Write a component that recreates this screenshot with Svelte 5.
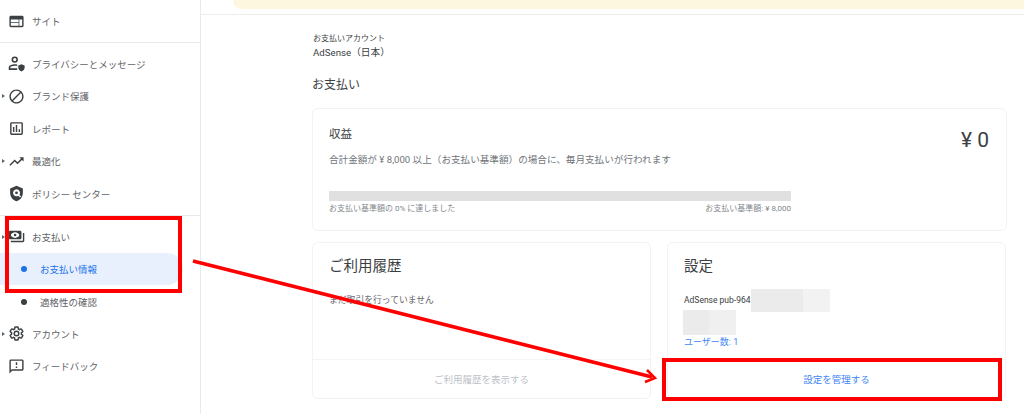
<script>
  // side nav rows, top to bottom
  const icons = {
    site: "M20 4H4c-1.100 0-2 .9-2 2v12c0 1.100.9 2 2 2h16c1.100 0 2-.9 2-2V6c0-1.100-.9-2-2-2zm-5 14H4v-4h11v4zm0-5H4V9h11v4zm5 5h-4V9h4v9z",
    block: "M12 2C6.480 2 2 6.480 2 12s4.480 10 10 10 10-4.480 10-10S17.520 2 12 2zM4 12c0-4.420 3.580-8 8-8 1.850 0 3.550.63 4.900 1.690L5.690 16.900C4.630 15.550 4 13.850 4 12zm8 8c-1.850 0-3.550-.63-4.900-1.690L18.310 7.100C19.370 8.450 20 10.150 20 12c0 4.420-3.580 8-8 8z",
    report: "M19 3H5c-1.100 0-2 .9-2 2v14c0 1.100.9 2 2 2h14c1.100 0 2-.9 2-2V5c0-1.100-.9-2-2-2zm0 16H5V5h14v14zM7 10h2v7H7zm4-3h2v10h-2zm4 6h2v4h-2z",
    trend: "M16 6l2.290 2.290-4.880 4.880-4-4L2 16.590 3.410 18l6-6 4 4 6.300-6.290L22 12V6z",
    policy: "M12 1L3 5v6c0 5.550 3.840 10.740 9 12 5.160-1.260 9-6.450 9-12V5l-9-4zm0 5a5 5 0 0 1 4.100 7.900l2.300 2.300-1.400 1.400-2.300-2.300A5 5 0 1 1 12 6zm0 3a2 2 0 1 0 0 4 2 2 0 0 0 0-4z",
    payments: "M19 14V6c0-1.100-.9-2-2-2H3c-1.100 0-2 .9-2 2v8c0 1.100.9 2 2 2h14c1.100 0 2-.9 2-2zM10 6c2.500 0 6 2 6 4s-3.500 4-6 4-6-2-6-4 3.500-4 6-4zm0 2.200a1.800 1.800 0 1 0 0 3.600 1.800 1.800 0 0 0 0-3.600zM23 7v11c0 1.100-.9 2-2 2H4v-2h17V7h2z",
    feedback: "M20 2H4c-1.100 0-1.990.9-1.990 2L2 22l4-4h14c1.100 0 2-.9 2-2V4c0-1.100-.9-2-2-2zm0 14H5.170L4 17.170V4h16v12zM11 12h2v2h-2zm0-6h2v4h-2z",
    person: "M9.500 2a4.500 4.500 0 1 1 0 9 4.500 4.500 0 0 1 0-9zm0 2.200a2.300 2.300 0 1 0 0 4.600 2.300 2.300 0 0 0 0-4.600zM1 21v-3.500c0-3 5.500-4.500 8.500-4.500 1 0 2.300.2 3.500.5v2.200c-1.100-.3-2.500-.5-3.500-.5-2.600 0-6.200 1.200-6.200 2.300v1.200H13V21H1zm18-8l4.500 1.800v3c0 2.700-2 4.600-4.500 5.400-2.500-.8-4.500-2.700-4.500-5.400v-3L19 13z",
    gear: "M19.430 12.980c.04-.32.07-.64.07-.98s-.03-.66-.07-.98l2.110-1.650c.19-.15.24-.42.12-.64l-2-3.460c-.12-.22-.39-.3-.61-.22l-2.490 1c-.52-.4-1.080-.73-1.690-.98l-.38-2.650C14.460 2.180 14.250 2 14 2h-4c-.25 0-.46.18-.49.42l-.38 2.650c-.61.25-1.170.59-1.690.98l-2.490-1c-.23-.08-.49 0-.61.22l-2 3.460c-.13.22-.07.49.12.64l2.110 1.650c-.04.32-.07.65-.07.98s.03.66.07.98l-2.110 1.650c-.19.15-.24.42-.12.64l2 3.460c.12.22.39.3.61.22l2.490-1c.52.4 1.080.73 1.690.98l.38 2.650c.03.24.24.42.49.42h4c.25 0 .46-.18.49-.42l.38-2.650c.61-.25 1.170-.59 1.690-.98l2.490 1c.23.08.49 0 .61-.22l2-3.460c.12-.22.07-.49-.12-.64l-2.110-1.650zM12 15.500c-1.930 0-3.500-1.570-3.500-3.500s1.570-3.500 3.500-3.500 3.500 1.570 3.500 3.500-1.570 3.500-3.500 3.500z"
  };

  const group1 = [
    { label: "プライバシーとメッセージ", icon: "person" },
    { label: "ブランド保護", icon: "block", caret: true },
    { label: "レポート", icon: "report" },
    { label: "最適化", icon: "trend", caret: true },
    { label: "ポリシー センター", icon: "policy" }
  ];
  const group2 = [
    { label: "アカウント", icon: "gear", caret: true, outline: true },
    { label: "フィードバック", icon: "feedback" }
  ];
</script>

{#snippet navRow(item)}
  <div class="nav-row">
    <span class="caret" class:on={item.caret}></span>
    <svg class="nav-icon" class:outline={item.outline} viewBox={item.outline ? "-1 -1 26 26" : "0 0 24 24"}>
      <path d={icons[item.icon]} fill-rule="evenodd" />
    </svg>
    <span>{item.label}</span>
  </div>
{/snippet}

<div class="page">
  <aside class="side">
    <div class="group first">
      {@render navRow({ label: "サイト", icon: "site" })}
    </div>
    <div class="group">
      {#each group1 as item}
        {@render navRow(item)}
      {/each}
    </div>
    <div class="group last">
      {@render navRow({ label: "お支払い", icon: "payments", caret: true })}
      <div class="sub-row active"><span class="dot"></span>お支払い情報</div>
      <div class="sub-row"><span class="dot"></span>適格性の確認</div>
      {#each group2 as item}
        {@render navRow(item)}
      {/each}
    </div>
  </aside>

  <main class="main">
    <div class="top-strip"><div class="banner"></div></div>
    <div class="content">
      <div class="acct-label">お支払いアカウント</div>
      <div class="acct-name">AdSense（日本）</div>
      <h1 class="page-title">お支払い</h1>

      <section class="card earnings">
        <div class="earn-head">
          <div>
            <h2 class="earn-title">収益</h2>
            <p class="earn-note">合計金額が ¥ 8,000 以上（お支払い基準額）の場合に、毎月支払いが行われます</p>
          </div>
          <div class="earn-amount">¥ 0</div>
        </div>
        <div class="bar"></div>
        <div class="bar-caps">
          <span>お支払い基準額の 0% に達しました</span>
          <span>お支払い基準額: ¥ 8,000</span>
        </div>
      </section>

      <div class="cols">
        <section class="card col">
          <div class="col-body">
            <h2 class="col-title">ご利用履歴</h2>
            <p class="col-text">まだ取引を行っていません</p>
          </div>
          <div class="col-foot muted">ご利用履歴を表示する</div>
        </section>
        <section class="card col">
          <div class="col-body">
            <h2 class="col-title">設定</h2>
            <div class="pub-line">AdSense pub-964<span class="mask m1"></span></div>
            <div class="mask m2"></div>
            <div class="users">ユーザー数: 1</div>
          </div>
          <div class="col-foot link">設定を管理する</div>
        </section>
      </div>
    </div>
  </main>

  <!-- red annotations drawn over the screenshot -->
  <div class="mark mark-nav"></div>
  <div class="mark mark-manage"></div>
  <svg class="arrow" viewBox="0 0 1024 414" width="1024" height="414">
    <line x1="193" y1="261" x2="652" y2="377" stroke="#f00" stroke-width="3.500" />
    <path d="M647 370 L655 378 L645 382" fill="none" stroke="#f00" stroke-width="2.500" />
  </svg>
</div>

<style>
  :global(body) {
    margin: 0;
    background: #fff;
  }

  .page {
    position: relative;
    display: flex;
    width: 1024px;
    height: 414px;
    overflow: hidden;
    font-family: Roboto, "Noto Sans CJK JP", sans-serif;
    color: #3c4043;
  }

  .side {
    width: 200px;
    flex: none;
    border-right: 1px solid #e8eaed;
  }

  .group {
    border-bottom: 1px solid #e8eaed;
    padding: 4.4px 0 5px;
  }

  .group.first {
    padding: 5px 0;
  }

  .group.last {
    border-bottom: none;
    padding-top: 4.8px;
  }

  .nav-row,
  .sub-row {
    display: flex;
    align-items: center;
    height: 32.4px;
    font-size: 9.5px;
    color: #5f6368;
  }

  .caret {
    width: 0;
    height: 0;
    margin: 0 2.5px 0 2px;
    border-left: 3px solid transparent;
    border-top: 2.5px solid transparent;
    border-bottom: 2.5px solid transparent;
  }

  .caret.on {
    border-left-color: #5f6368;
  }

  .nav-icon {
    width: 17px;
    height: 17px;
    margin-right: 7.5px;
    fill: #3c4043;
    flex: none;
  }

  .nav-icon.outline {
    fill: none;
    stroke: #3c4043;
    stroke-width: 2.2;
  }

  .sub-row {
    padding-left: 21px;
    width: 183px;
    box-sizing: border-box;
    border-radius: 0 16px 16px 0;
  }

  .dot {
    width: 6px;
    height: 6px;
    border-radius: 50%;
    background: #3c4043;
    margin-right: 13px;
  }

  .sub-row.active {
    background: #e8f0fe;
    color: #1a73e8;
  }

  .sub-row.active .dot {
    background: #1a73e8;
  }

  .main {
    flex: 1;
    min-width: 0;
  }

  .top-strip {
    height: 14px;
    padding-left: 32px;
    border-bottom: 1px solid #eceef0;
  }

  .banner {
    height: 9px;
    background: #fef7e0;
    border-radius: 0 0 0 8px;
  }

  .content {
    padding: 18px 17px 0 111px;
  }

  .acct-label {
    font-size: 8px;
    line-height: 11px;
    padding-left: 1px;
  }

  .acct-name {
    font-size: 9.7px;
    line-height: 14px;
    margin-top: 2px;
    padding-left: 1px;
  }

  .page-title {
    font-size: 12px;
    font-weight: 400;
    line-height: 18px;
    margin: 16px 0 14px;
  }

  .card {
    border: 1px solid #f1f3f4;
    border-radius: 6px;
    box-sizing: border-box;
    background: #fff;
  }

  .earnings {
    height: 123px;
    padding: 16px 17px 0 16px;
  }

  .earn-head {
    display: flex;
    justify-content: space-between;
    height: 45px;
  }

  .earn-title {
    font-size: 11.5px;
    font-weight: 400;
    line-height: 18px;
    margin: 0;
  }

  .earn-note {
    font-size: 9.6px;
    line-height: 14px;
    margin: 10px 0 0;
    color: #70757a;
  }

  .earn-amount {
    font-size: 21px;
    line-height: 28px;
    margin-top: 1px;
  }

  .bar {
    width: 462px;
    height: 10px;
    margin-top: 21px;
    background: #e0e0e0;
  }

  .bar-caps {
    width: 462px;
    display: flex;
    justify-content: space-between;
    font-size: 8px;
    line-height: 11px;
    margin-top: 2px;
    color: #80868b;
  }

  .cols {
    display: grid;
    grid-template-columns: 339px 339px;
    gap: 16px;
    margin-top: 11px;
  }

  .col {
    height: 157px;
    display: flex;
    flex-direction: column;
  }

  .col-body {
    flex: 1;
    padding: 14px 16px 0;
    min-height: 0;
  }

  .col-title {
    font-size: 14.5px;
    font-weight: 400;
    line-height: 20px;
    margin: 0;
  }

  .col-text {
    font-size: 8.8px;
    line-height: 13px;
    margin: 17px 0 0;
    color: #5f6368;
  }

  .pub-line {
    display: flex;
    font-size: 8.5px;
    line-height: 13px;
    margin-top: 17px;
    height: 13px;
  }

  .mask {
    display: block;
    background: linear-gradient(90deg, #ebebeb 0 66%, #f2f2f2 66%);
  }

  .m1 {
    width: 79px;
    height: 23px;
    margin-top: -5px;
  }

  .m2 {
    width: 53px;
    height: 25px;
    margin: 3px 0 0 -1px;
    background: linear-gradient(90deg, #ebebeb 0 50%, #f0f0f0 50%);
  }

  .users {
    font-size: 9px;
    line-height: 13px;
    margin-top: 1px;
    color: #4285f4;
  }

  .col-foot {
    height: 38px;
    display: flex;
    align-items: center;
    justify-content: center;
    border-top: 1px solid #f3f4f5;
    font-size: 9.5px;
  }

  .muted {
    color: #bdc1c6;
  }

  .link {
    color: #4285f4;
  }

  .mark {
    position: absolute;
    box-sizing: border-box;
    border: 4px solid #f00;
  }

  .mark-nav {
    left: 5px;
    top: 216px;
    width: 177px;
    height: 77px;
  }

  .mark-manage {
    left: 662px;
    top: 358px;
    width: 340px;
    height: 43px;
  }

  .arrow {
    position: absolute;
    left: 0;
    top: 0;
    pointer-events: none;
  }
</style>
